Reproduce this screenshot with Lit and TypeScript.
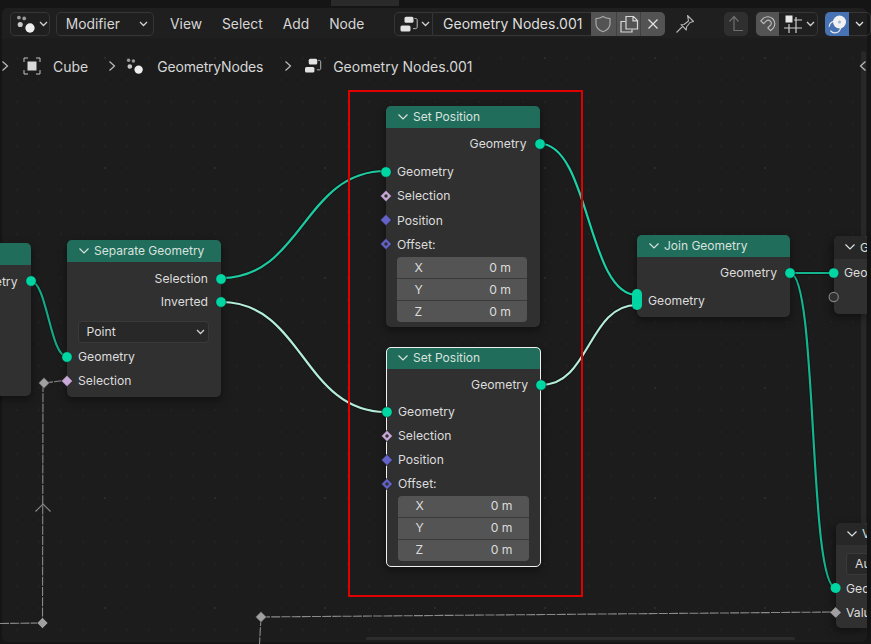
import { LitElement, html, css, svg } from "lit";
import { customElement } from "lit/decorators.js";

type Sock = "geo" | "sel" | "selplain" | "pos" | "off" | "multi";
interface Row { label: string; side: "in" | "out"; sock: Sock; h: number; }
interface NodeDef {
  title: string; x: number; y: number; w: number; h: number;
  selected?: boolean; rows: Row[]; pad: number;
  select?: { label: string };
  vec?: boolean;
}

const setPos1: Row[] = [
  { label: "Geometry", side: "out", sock: "geo", h: 22.5 },
  { label: "Geometry", side: "in", sock: "geo", h: 28.5 },
  { label: "Selection", side: "in", sock: "sel", h: 24.5 },
  { label: "Position", side: "in", sock: "pos", h: 24 },
  { label: "Offset:", side: "in", sock: "off", h: 24.5 },
];
const setPos2: Row[] = [
  { label: "Geometry", side: "out", sock: "geo", h: 22.5 },
  { label: "Geometry", side: "in", sock: "geo", h: 27.5 },
  { label: "Selection", side: "in", sock: "sel", h: 24 },
  { label: "Position", side: "in", sock: "pos", h: 24 },
  { label: "Offset:", side: "in", sock: "off", h: 24 },
];

const NODES: NodeDef[] = [
  { title: "", x: -60, y: 243, w: 90.5, h: 153, pad: 5, rows: [{ label: "Geometry", side: "out", sock: "geo", h: 22 }] },
  {
    title: "Separate Geometry", x: 67, y: 240, w: 154, h: 157, pad: 5,
    rows: [
      { label: "Selection", side: "out", sock: "geo", h: 23 },
      { label: "Inverted", side: "out", sock: "geo", h: 23 },
    ],
    select: { label: "Point" },
  },
  { title: "Set Position", x: 386, y: 106, w: 153.5, h: 221, pad: 4.5, rows: setPos1, vec: true },
  { title: "Set Position", x: 386, y: 347, w: 155, h: 220, pad: 4.5, rows: setPos2, vec: true, selected: true },
  {
    title: "Join Geometry", x: 637, y: 235, w: 153, h: 82, pad: 4,
    rows: [
      { label: "Geometry", side: "out", sock: "geo", h: 23 },
      { label: "Geometry", side: "in", sock: "multi", h: 28.5 },
    ],
  },
];

const GN = svg`<circle cx="2.6" cy="2.2" r="1.7" fill="#9a9a9a"/><circle cx="7.4" cy="3" r="1.7" fill="#9a9a9a"/><circle cx="3.8" cy="8.5" r="2.3" fill="#c8c8c8"/><circle cx="12.6" cy="11.6" r="4.2" fill="#eeeeee"/>`;
const TREE = svg`<rect x="4.5" y="0.8" width="9" height="6" rx="1.6" fill="#e2e2e2"/><rect x="0.5" y="9.5" width="10" height="6" rx="1.6" fill="#e2e2e2"/><path d="M14.5 2.5h1.2c1 0 1.5.6 1.5 1.5v7c0 1-.5 1.6-1.5 1.6h-2.6" fill="none" stroke="#bdbdbd" stroke-width="1"/>`;

@customElement("app-root")
export class AppRoot extends LitElement {
  static styles = css`
    :host { display: block; width: 871px; height: 644px; overflow: hidden; font-family: Inter, "Liberation Sans", sans-serif; }
    .app { position: relative; width: 871px; height: 644px; background: #151515; overflow: hidden; color: #e0e0e0; }
    .tab { position: absolute; left: 331px; top: 0; width: 68px; height: 6px; background: #2a2a2a; }
    .area {
      position: absolute; left: 2px; top: 8px; right: 4px; bottom: 2px; border-radius: 6px; background-color: #1c1c1c;
      background-image: radial-gradient(circle, #2b2b2b 0.9px, transparent 1.2px), radial-gradient(circle, #212121 0.7px, transparent 1px);
      background-size: 110px 110px, 22px 22px;
      background-position: 48px -5px, 4px -5px;
    }
    .band { position: absolute; left: 2px; top: 8px; right: 4px; height: 30px; background: #1f1f1f; border-radius: 6px 6px 0 0; }
    .wires { position: absolute; left: 0; top: 0; width: 871px; height: 644px; }
    .node { position: absolute; background: #303030; border-radius: 5px; box-shadow: 0 3px 9px rgba(0,0,0,.45); font-size: 12.2px; color: #dcdcdc; box-sizing: border-box; }
    .node.selected { outline: 1.5px solid #f0f0f0; outline-offset: -1px; }
    .head { height: 22px; box-sizing: border-box; padding: 0 0 1px 11px; background: #1f6d5a; border-radius: 5px 5px 0 0; display: flex; align-items: center; gap: 4px; color: #d8e2df; font-size: 12px; overflow: hidden; white-space: nowrap; }
    .chev { width: 12px; height: 8px; flex: none; }
    .row { position: relative; display: flex; align-items: center; padding: 0 13px 0 11px; box-sizing: border-box; white-space: nowrap; }
    .selected .row { padding-left: 12px; }
    .row.out { justify-content: flex-end; }
    .sock { position: absolute; width: 16px; height: 16px; top: 50%; margin-top: -8px; overflow: visible; }
    .row.in .sock { left: -8px; }
    .row.out .sock { right: -8px; }
    .selected .row.in .sock { left: -7.5px; }
    .selected .row.out .sock { right: -7.5px; }
    .row.low .sock { top: auto; bottom: 4px; margin-top: 0; }
    .row.low { align-items: flex-end; padding-bottom: 5px; line-height: 15px; }
    .pill { position: absolute; left: -5px; bottom: 2.5px; width: 10px; height: 21px; border-radius: 5px; background: #00d6a3; }
    .vec { margin: 0.5px 12.5px 0 10.5px; background: #545454; border-radius: 4px; overflow: hidden; }
    .selected .vec { margin: 0 12.5px 0 11.5px; }
    .vrow { height: 22px; display: flex; justify-content: space-between; align-items: center; padding: 0 16px 1px 18px; box-sizing: border-box; border-top: 1px solid #3a3a3a; }
    .vrow:first-child { border-top: none; height: 21px; }
    .select { display: flex; justify-content: space-between; align-items: center; box-sizing: border-box; background: #282828; border: 1px solid #3a3a3a; border-radius: 4px; height: 22px; width: 131px; margin: 8px 0 1.5px 10.5px; padding: 0 3px 1px 8px; }
    .mini { width: 9px; height: 6px; flex: none; }
    .cut { position: absolute; overflow: hidden; background: #303030; box-shadow: -2px 3px 9px rgba(0,0,0,.45); font-size: 12.2px; color: #dcdcdc; border-radius: 5px 0 0 5px; white-space: nowrap; }
    .cut .head { background: #272727; padding-left: 10px; gap: 4px; }
    .cr1 { left: 834px; top: 236px; width: 33px; height: 78px; }
    .cr2 { left: 836px; top: 523px; width: 31px; height: 105px; }
    .cr1 .head { height: 23px; }
    .l1 { margin: 5px 0 0 10px; line-height: 18px; }
    .au { margin: 8px 0 0 10px; height: 22px; width: 50px; background: #282828; border: 1px solid #3a3a3a; border-radius: 4px; box-sizing: border-box; padding-left: 8px; line-height: 20px; }
    .l2 { margin: 5px 0 0 10px; line-height: 18px; }
    .l3 { margin: 6px 0 0 10px; line-height: 18px; }
    .redbox { position: absolute; left: 348px; top: 90px; width: 235px; height: 507px; border: 2px solid #e00000; box-sizing: border-box; }

    .bar { position: absolute; left: 0; top: 12px; width: 871px; height: 24px; display: flex; align-items: stretch; font-size: 13.8px; color: #d6d6d6; }
    .drop { display: flex; align-items: center; box-sizing: border-box; border: 1px solid #363636; border-radius: 5px; }
    .ed { margin-left: 10px; width: 40px; padding-left: 5px; gap: 3px; }
    .mod { margin-left: 6px; width: 99px; padding: 0 5px 1px 9px; justify-content: space-between; }
    .mod .mini { margin-top: 1px; }
    .menu { margin-left: 16px; display: flex; align-items: center; padding-bottom: 1px; }
    .m2, .m3, .m4 { margin-left: 20px; }
    .tree { margin-left: 30px; display: flex; border: 1px solid #363636; border-radius: 5px 0 0 5px; width: 39px; box-sizing: border-box; align-items: center; padding-left: 5px; gap: 3px; }
    .name { width: 159px; box-sizing: border-box; display: flex; align-items: center; padding: 0 0 2px 10px; border-top: 1px solid #363636; border-bottom: 1px solid #363636; font-size: 14px; color: #dedede; white-space: nowrap; }
    .btn { width: 25px; display: flex; align-items: center; justify-content: center; background: #535353; box-sizing: border-box; border-left: 1px solid #424242; }
    .btn.first { border-left: none; }
    .btn.last { border-radius: 0 5px 5px 0; }
    .pin { margin-left: 8px; width: 24px; display: flex; align-items: center; justify-content: center; }
    .up { margin-left: 27px; width: 24px; background: #2f2f2f; border-radius: 5px; display: flex; align-items: center; justify-content: center; }
    .mag { margin-left: 8px; width: 23px; background: #545454; border-radius: 5px 0 0 5px; display: flex; align-items: center; justify-content: center; }
    .snap { width: 40px; border: 1px solid #363636; border-left: none; border-radius: 0 5px 5px 0; display: flex; align-items: center; box-sizing: border-box; padding-left: 5px; gap: 4px; }
    .ov { margin-left: 7px; width: 24px; background: #4772b3; border-radius: 5px 0 0 5px; display: flex; align-items: center; justify-content: center; }
    .ovd { width: 22px; border: 1px solid #363636; border-left: none; border-radius: 0 5px 5px 0; display: flex; align-items: center; justify-content: center; box-sizing: border-box; }

    .crumbs { position: absolute; left: 0; top: 55px; height: 22px; display: flex; align-items: center; font-size: 14px; color: #d6d6d6; white-space: nowrap; }
    .gt { width: 8px; height: 12px; flex: none; }
    .c0 { margin-left: 1px; }
    .c1 { margin-left: 14px; width: 18px; height: 18px; }
    .t1 { margin-left: 12px; }
    .c2 { margin-left: 20px; }
    .c3 { margin-left: 10px; width: 18px; height: 16px; }
    .t3 { margin-left: 13px; letter-spacing: -0.2px; }
    .c4 { margin-left: 21px; }
    .c5 { margin-left: 12px; width: 18px; height: 16px; }
    .t5 { margin-left: 11px; }

    .vscroll { position: absolute; left: 861px; top: 51px; width: 5px; height: 480px; background: #282828; border-radius: 3px; }
    .hscroll { position: absolute; left: 366px; top: 637px; width: 429px; height: 3px; background: #2c2c2c; border-radius: 2px; }
    .arrow { position: absolute; left: 859px; top: 60px; width: 8px; height: 12px; }
  `;

  private chev() {
    return html`<svg class="chev" viewBox="0 0 12 8"><path d="M1.5 1.5 6 6l4.5-4.5" fill="none" stroke="#d8e2df" stroke-width="1.2"/></svg>`;
  }
  private mini(c = "#d0d0d0") {
    return html`<svg class="mini" viewBox="0 0 9 6"><path d="M1 1l3.5 3.5L8 1" fill="none" stroke="${c}" stroke-width="1.3"/></svg>`;
  }
  private sock(s: Sock) {
    const edge = "#1a1a1a";
    const dia = "M8 2.3 13.7 8 8 13.7 2.3 8z";
    switch (s) {
      case "geo":
        return html`<svg class="sock" viewBox="0 0 16 16"><circle cx="8" cy="8" r="5.2" fill="#00d6a3" stroke="${edge}" stroke-width=".5"/></svg>`;
      case "sel":
        return html`<svg class="sock" viewBox="0 0 16 16"><path d="${dia}" fill="#c9a9d8" stroke="${edge}" stroke-width=".8"/><circle cx="8" cy="8" r="1.7" fill="#303030"/></svg>`;
      case "selplain":
        return html`<svg class="sock" viewBox="0 0 16 16"><path d="${dia}" fill="#c9a9d8" stroke="${edge}" stroke-width=".8"/></svg>`;
      case "pos":
        return html`<svg class="sock" viewBox="0 0 16 16"><path d="${dia}" fill="#6363c7" stroke="${edge}" stroke-width=".8"/></svg>`;
      case "off":
        return html`<svg class="sock" viewBox="0 0 16 16"><path d="${dia}" fill="#6363c7" stroke="${edge}" stroke-width=".8"/><circle cx="8" cy="8" r="1.7" fill="#303030"/></svg>`;
      case "multi":
        return html`<span class="pill"></span>`;
    }
  }
  private node(n: NodeDef) {
    const style = `left:${n.x}px;top:${n.y}px;width:${n.w}px;height:${n.h}px`;
    return html`<div class="node ${n.selected ? "selected" : ""}" style="${style}">
      <div class="head">${n.title ? this.chev() : ""}${n.title}</div>
      <div style="padding-top:${n.pad}px">
        ${n.rows.map((r) => {
          const low = r.h > 25;
          return html`<div class="row ${r.side} ${low ? "low" : ""}" style="height:${r.h}px">${r.label}${this.sock(r.sock)}</div>`;
        })}
        ${n.select
          ? html`<div class="select"><span>${n.select.label}</span>${this.mini()}</div>
            <div class="row in" style="height:24px">Geometry${this.sock("geo")}</div>
            <div class="row in" style="height:24px">Selection${this.sock("selplain")}</div>`
          : ""}
        ${n.vec
          ? html`<div class="vec">
              ${["X", "Y", "Z"].map((a) => html`<div class="vrow"><span>${a}</span><span>0 m</span></div>`)}
            </div>`
          : ""}
      </div>
    </div>`;
  }

  private wires() {
    const wire = (d: string, c: string) => svg`<path d="${d}" fill="none" stroke="rgba(0,0,0,.35)" stroke-width="4"/><path d="${d}" fill="none" stroke="${c}" stroke-width="2.2"/>`;
    const dash = (d: string) => svg`<path d="${d}" fill="none" stroke="#8a8a8a" stroke-width="1.1" stroke-dasharray="9 1.2"/>`;
    const dia = (x: number, y: number) => svg`<path d="M${x} ${y - 5.5}l5.5 5.5-5.5 5.5-5.5-5.5z" fill="#a0a0a0" stroke="#1a1a1a" stroke-width=".6"/>`;
    return svg`
      ${wire("M30.5 281 C 47 281, 50 356.5, 67 356.5", "#14a884")}
      ${wire("M221 278 C 303 278, 303 171, 386 171", "#1ec8a0")}
      ${wire("M221 302 C 303 302, 303 412, 386 412", "#b4ecd9")}
      ${wire("M539 143.5 C 590 143.5, 587 295, 637 295", "#1ccfa5")}
      ${wire("M541 385 C 590 385, 588 305, 637 305", "#b4ecd9")}
      ${wire("M790 273 L 834 273", "#14b48e")}
      ${wire("M790 273 C 818 273, 808 588, 836 588", "#14b48e")}
      ${dash("M44 383 L 67 380")}
      ${dash("M43 383 L 42.5 623")}
      ${dash("M0 623.5 L 42 623")}
      ${dash("M261 617 L 836 612")}
      ${dash("M261 617 L 259.5 644")}
      <path d="M35.5 511.5 43 504l7.5 7.5" fill="none" stroke="#8a8a8a" stroke-width="1.1"/>
      ${dia(44, 383)}
      ${dia(42.5, 623)}
      ${dia(261, 617)}
    `;
  }

  render() {
    return html`<div class="app">
      <div class="tab"></div>
      <div class="area"></div>
      <div class="band"></div>
      <div class="vscroll"></div>
      <svg class="arrow" viewBox="0 0 8 12"><path d="M6.5 1.5 1.5 6l5 4.5" fill="none" stroke="#bdbdbd" stroke-width="1.2"/></svg>
      <div class="hscroll"></div>
      <svg class="wires" viewBox="0 0 871 644">${this.wires()}</svg>
      ${NODES.map((n) => this.node(n))}

      <div class="cut cr1">
        <div class="head">${this.chev()}Group Output</div>
        <div class="l1">Geometry</div>
      </div>
      <div class="cut cr2">
        <div class="head">${this.chev()}Viewer</div>
        <div class="au">Auto</div>
        <div class="l2">Geometry</div>
        <div class="l3">Value</div>
      </div>
      <svg class="wires" viewBox="0 0 871 644">
        <circle cx="833.7" cy="273" r="4.8" fill="#00d6a3"/>
        <circle cx="833.7" cy="297" r="4.6" fill="#303030" stroke="#808080" stroke-width="1.2"/>
        <circle cx="835.6" cy="588" r="5" fill="#00d6a3"/>
        <path d="M835.6 607l5.4 5.4-5.4 5.4-5.4-5.4z" fill="#a0a0a0"/>
      </svg>

      <div class="redbox"></div>

      <div class="bar">
        <div class="drop ed">
          <svg width="20" height="18" viewBox="0 0 18 16">${GN}</svg>${this.mini()}
        </div>
        <div class="drop mod"><span>Modifier</span>${this.mini()}</div>
        <div class="menu">View</div>
        <div class="menu m2">Select</div>
        <div class="menu m3">Add</div>
        <div class="menu m4">Node</div>
        <div class="tree"><svg width="18" height="17" viewBox="0 0 18 17">${TREE}</svg>${this.mini()}</div>
        <div class="name">Geometry Nodes.001</div>
        <div class="btn first"><svg width="18" height="18" viewBox="0 0 18 18"><path d="M9 1.5c2 1.4 4.3 2 7 2.2v5c0 3.8-3 6.5-7 8-4-1.5-7-4.2-7-8v-5c2.7-.2 5-.8 7-2.2z" fill="none" stroke="#a8a8a8" stroke-width="1.2"/></svg></div>
        <div class="btn"><svg width="20" height="20" viewBox="0 0 20 20"><path d="M7 2.5h7.500l4 4v8.500H7zM14 2.500v4.300h4.500" fill="none" stroke="#d8d8d8" stroke-width="1.2"/><path d="M6.500 7.500H2v10.500h11v-2.500" fill="none" stroke="#d8d8d8" stroke-width="1.2"/></svg></div>
        <div class="btn last"><svg width="12" height="12" viewBox="0 0 12 12"><path d="M1.5 1.5l9 9M10.5 1.5l-9 9" stroke="#e0e0e0" stroke-width="1.3" fill="none"/></svg></div>
        <div class="pin"><svg width="20" height="20" viewBox="0 0 20 20"><path d="M12.5 1.500l6 6-3.500 1-3.500 4.500-.2 3-5.300-5.300 3-.2 4.500-3.500zM7.500 12.500l-6 6" fill="none" stroke="#b5b5b5" stroke-width="1.1" stroke-linejoin="round"/></svg></div>
        <div class="up"><svg width="16" height="18" viewBox="0 0 16 18"><path d="M1.5 6.500 6 1.500l4.500 5M6 2v13.500h9" fill="none" stroke="#6f6f6f" stroke-width="1.2"/></svg></div>
        <div class="mag"><svg width="19" height="19" viewBox="0 0 19 19"><path d="M2.800 5.900 5.600 3.100A7 7 0 0 1 15.400 12.900L12.600 15.700 9.800 12.900 12.600 10.100A3 3 0 0 0 8.400 5.900L5.600 8.700Z" fill="none" stroke="#c0c0c0" stroke-width="1.1" stroke-linejoin="round"/></svg></div>
        <div class="snap"><svg width="18" height="18" viewBox="0 0 18 18"><rect x="1.5" y="0.5" width="7" height="7" fill="#e8e8e8"/><path d="M0 13h18M5 9v9M12 2v16M10 5h8" stroke="#cfcfcf" stroke-width="1.2" fill="none"/></svg>${this.mini()}</div>
        <div class="ov"><svg width="20" height="20" viewBox="0 0 20 20"><circle cx="8" cy="13" r="5.8" fill="none" stroke="#e8e8e8" stroke-width="1.3" stroke-dasharray="14 4"/><circle cx="12.5" cy="8" r="6.5" fill="#f2f2f2"/><circle cx="12.5" cy="8" r="1.5" fill="#9fb7d8"/></svg></div>
        <div class="ovd">${this.mini("#e0e0e0")}</div>
      </div>

      <div class="crumbs">
        <svg class="gt c0" viewBox="0 0 8 12"><path d="M1.5 1.5 6.500 6l-5 4.500" fill="none" stroke="#bdbdbd" stroke-width="1.2"/></svg>
        <svg class="c1" viewBox="0 0 18 18"><rect x="4.5" y="4.500" width="9" height="9" fill="#d8d8d8"/><path d="M1 5V1h4M13 1h4v4M17 13v4h-4M5 17H1v-4" fill="none" stroke="#c4c4c4" stroke-width="1"/></svg>
        <span class="t1">Cube</span>
        <svg class="gt c2" viewBox="0 0 8 12"><path d="M1.5 1.5 6.500 6l-5 4.500" fill="none" stroke="#bdbdbd" stroke-width="1.2"/></svg>
        <svg class="c3" viewBox="0 0 18 16">${GN}</svg>
        <span class="t3">GeometryNodes</span>
        <svg class="gt c4" viewBox="0 0 8 12"><path d="M1.5 1.5 6.500 6l-5 4.500" fill="none" stroke="#bdbdbd" stroke-width="1.2"/></svg>
        <svg class="c5" viewBox="0 0 18 17">${TREE}</svg>
        <span class="t5">Geometry Nodes.001</span>
      </div>
    </div>`;
  }
}
